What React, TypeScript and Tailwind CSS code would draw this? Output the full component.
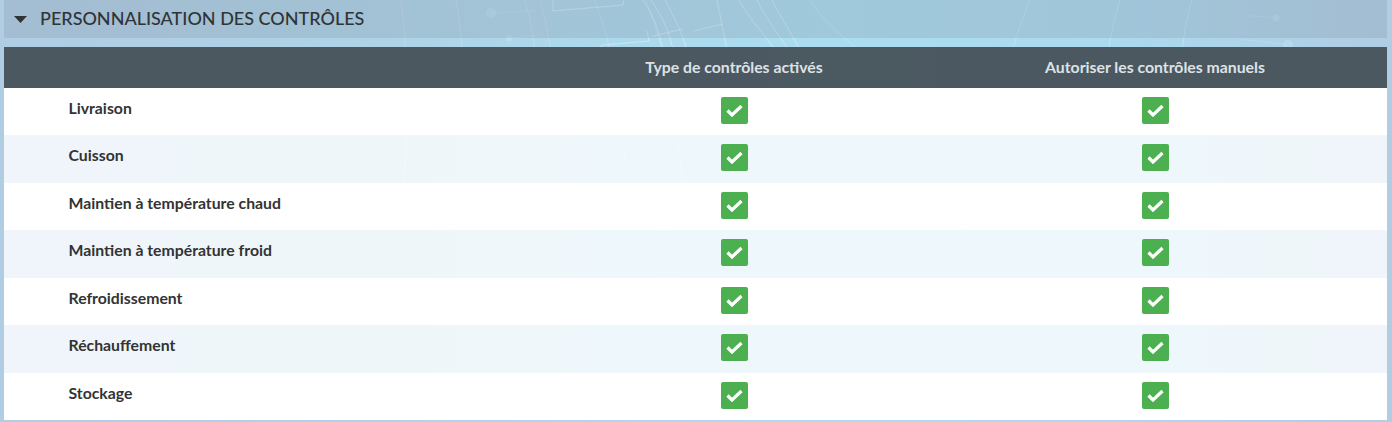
const rows = [
  'Livraison',
  'Cuisson',
  'Maintien à température chaud',
  'Maintien à température froid',
  'Refroidissement',
  'Réchauffement',
  'Stockage',
]

function Checked() {
  return (
    <span className="flex h-[27px] w-[27px] items-center justify-center rounded-[2px] bg-[#4caf50]">
      <svg width="17" height="13" viewBox="0 0 17 13" fill="none">
        <path d="M1.5 6.5l4.5 4.5 9.5-9" stroke="#fff" strokeWidth="3.2" />
      </svg>
    </span>
  )
}

function Backdrop() {
  return (
    <svg className="absolute inset-0 h-full w-full" viewBox="0 0 1392 422" fill="none">
      <g stroke="#fff" strokeOpacity="0.18">
        <path d="M401 0c8 60 8 130 0 230" />
        <path d="M456 0c10 60 12 130 6 230" />
        <path d="M525 0c14 50 20 130 18 230" />
        <path d="M540 0c14 50 24 130 24 230" />
        <path d="M594 0c22 50 32 130 34 230" />
        <path d="M646 0c20 50 34 130 40 230" />
      </g>
      <g stroke="#fff" strokeOpacity="0.38">
        <path d="M643 0c10 15 16 30 20 50" />
        <path d="M651 0c10 15 18 30 22 50" />
        <path d="M665 0c8 15 16 30 22 50" />
        <path d="M717 0c3 15 6 30 10 50" />
        <path d="M739 0c7 14 20 28 36 50" />
        <path d="M757 0c7 14 16 28 32 50" />
        <path d="M772 0c7 14 16 28 28 50" />
        <path d="M553 0v11l70-6 1-5" />
        <path d="M600 47l3-2 46-4-2-10" />
        <path d="M653 36l30-7" />
        <path d="M723 24l-30 7" />
      </g>
      <g stroke="#c8f0ff" strokeOpacity="0.5">
        <path d="M810 0c9 14 22 28 45 47" />
        <path d="M1030 0c-8 20-16 40-22 70" />
        <path d="M1120 0c-8 25-12 50-16 80" />
        <path d="M1192 0c-8 25-10 50-12 80" />
      </g>
      <g stroke="#fff" strokeOpacity="0.08">
        <path d="M855 47c50 40 90 90 110 200" />
        <path d="M470 82l70-16" />
        <path d="M560 60l60-16" />
      </g>
      <g fill="#c8f0ff" fillOpacity="0.3">
        <path d="M491 13l45-3v1l-45 3z" />
        <circle cx="491" cy="13" r="5" />
        <path d="M509 38l32-4v1l-32 4z" />
        <circle cx="509" cy="38" r="3.5" />
        <path d="M1246 15l30 2v1l-30-2z" />
        <circle cx="1276" cy="18" r="3.5" />
        <path d="M1243 39l44 5v1l-44-5z" />
        <circle cx="1288" cy="45" r="5" />
      </g>
    </svg>
  )
}

export default function App() {
  return (
    <div className="relative h-[422px] overflow-hidden bg-[linear-gradient(90deg,#b0cde4_0%,#aed4e8_30%,#abddf1_60%,#abd9ee_80%,#b0cde4_100%)] pl-1 pr-[5px] font-['Lato',sans-serif]">
      <Backdrop />
      <div className="relative">
        <div className="flex h-[38px] items-center bg-[#7a8290]/[0.22] pb-[1px] pl-[10px] text-[#2f3438]">
          <svg width="13" height="7" viewBox="0 0 13 7" className="mt-[2px]">
            <path d="M0 0h13L6.5 7z" fill="currentColor" />
          </svg>
          <h2 className="ml-[13px] text-[18px] font-medium uppercase">Personnalisation des contrôles</h2>
        </div>

        <div className="mt-[9px] grid h-[40.75px] grid-cols-[519.5px_421px_421px_1fr] items-center bg-[#465158]/95 pb-[1px] text-center text-[15.8px] font-bold text-[#dde2e6]">
          <span />
          <span>Type de contrôles activés</span>
          <span>Autoriser les contrôles manuels</span>
        </div>

        <div>
          {rows.map((label, i) => (
            <div
              key={label}
              className={`grid h-[47.5px] grid-cols-[519.5px_421px_421px_1fr] items-center ${
                i % 2 === 0 ? 'bg-white' : 'bg-white/80'
              }`}
            >
              <span className="pb-[8px] pl-[64.5px] text-[15.8px] font-bold text-[#333333]">{label}</span>
              <span className="flex justify-center pb-[2.5px]">
                <Checked />
              </span>
              <span className="flex justify-center pb-[2.5px]">
                <Checked />
              </span>
            </div>
          ))}
        </div>
      </div>
    </div>
  )
}
